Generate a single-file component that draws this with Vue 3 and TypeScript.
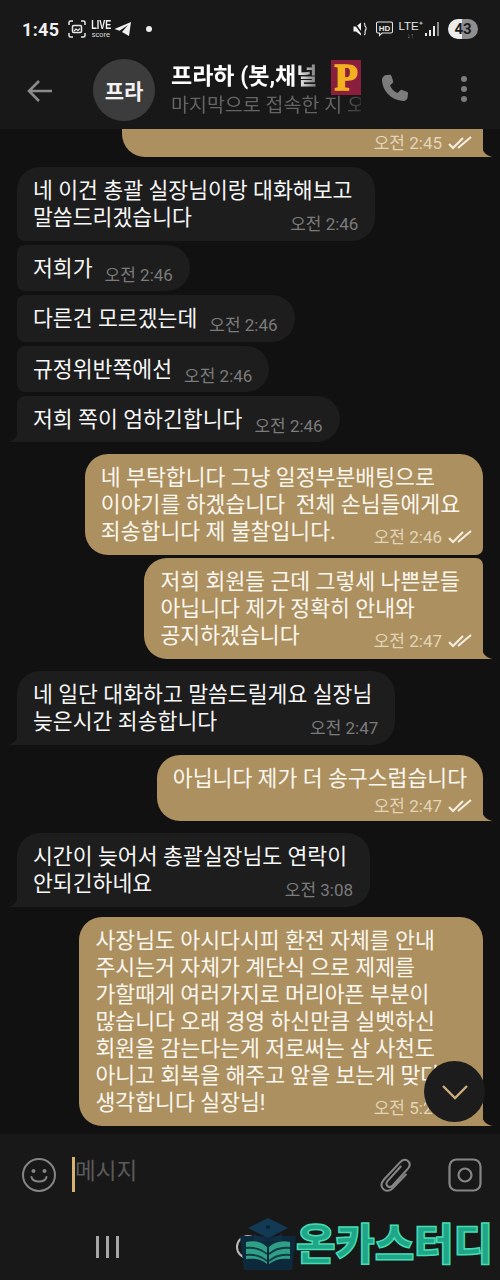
<script setup lang="ts">
interface Msg { lines: string[]; time: string; own: boolean; tail?: boolean; stack?: boolean; gap: number; small: string }
const messages: Msg[] = [
  { lines: ['네 이건 총괄 실장님이랑 대화해보고', '말씀드리겠습니다'], time: '오전 2:46', own: false, gap: 4, small: 'sbl' },
  { lines: ['저희가'], time: '오전 2:46', own: false, gap: 4, small: 'stl sbl' },
  { lines: ['다른건 모르겠는데'], time: '오전 2:46', own: false, gap: 4, small: 'stl sbl' },
  { lines: ['규정위반쪽에선'], time: '오전 2:46', own: false, gap: 4, small: 'stl sbl' },
  { lines: ['저희 쪽이 엄하긴합니다'], time: '오전 2:46', own: false, tail: true, gap: 12, small: 'stl' },
  { lines: ['네 부탁합니다 그냥 일정부분배팅으로', '이야기를 하겠습니다\u00a0\u00a0전체 손님들에게요', '죄송합니다 제 불찰입니다.'], time: '오전 2:46', own: true, gap: 3, small: 'sbr' },
  { lines: ['저희 회원들 근데 그렇세 나쁜분들', '아닙니다 제가 정확히 안내와', '공지하겠습니다'], time: '오전 2:47', own: true, tail: true, gap: 12, small: 'str' },
  { lines: ['네 일단 대화하고 말씀드릴게요 실장님', '늦은시간 죄송합니다'], time: '오전 2:47', own: false, tail: true, gap: 10, small: '' },
  { lines: ['아닙니다 제가 더 송구스럽습니다', ''], time: '오전 2:47', own: true, tail: true, stack: true, gap: 12, small: '' },
  { lines: ['시간이 늦어서 총괄실장님도 연락이', '안되긴하네요'], time: '오전 3:08', own: false, tail: true, gap: 10, small: '' },
  { lines: ['사장님도 아시다시피 환전 자체를 안내', '주시는거 자체가 계단식 으로 제제를', '가할때게 여러가지로 머리아픈 부분이', '많습니다 오래 경영 하신만큼 실벳하신', '회원을 감는다는게 저로써는 삼 사천도', '아니고 회복을 해주고 앞을 보는게 맞다고', '생각합니다 실장님!'], time: '오전 5:21', own: true, tail: true, gap: 0, small: '' },
]
const head = (m: Msg) => m.lines.slice(0, -1)
const last = (m: Msg) => m.lines[m.lines.length - 1]
</script>

<template>
  <div class="screen">
    <div class="status">
      <span class="clock">1:45</span>
      <svg class="st-ic" width="18" height="18" viewBox="0 0 18 18" fill="none" stroke="#e8e8e8" stroke-width="1.5">
        <path d="M1 5V2.5A1.5 1.5 0 0 1 2.500 1H5M13 1h2.500A1.500 1.500 0 0 1 17 2.500V5M17 13v2.500a1.500 1.500 0 0 1-1.500 1.500H13M5 17H2.500A1.500 1.500 0 0 1 1 15.500V13" />
        <rect x="4.500" y="5.500" width="9" height="7" rx="1.200" />
        <path d="M6 11l2-2 2 1.500 2-2" stroke-width="1.200" />
      </svg>
      <span class="live"><b>LIVE</b><i>score</i></span>
      <svg class="st-plane" width="18" height="16" viewBox="0 0 18 16"><path d="M17 1 0.500 8l5 1.800L14 4 8 11l7 4z" fill="#f0f0f0" /></svg>
      <span class="dot"></span>
      <span class="spacer"></span>
      <svg width="15" height="16" viewBox="0 0 15 16"><path d="M0.500 5.500h2.500L8 1.500v13L3 10.500H0.500z" fill="#f2f2f2" /><path d="M1 1.500 10 14" stroke="#1a1a1a" stroke-width="1.500" /><path d="M11 2c1.500 1 .5 2 1 3s1.500 1 1 3-1 1.500-1 3 1 2-1 3" fill="none" stroke="#ddd" stroke-width="1.200" /></svg>
      <svg class="st-hd" width="17" height="16" viewBox="0 0 17 16" fill="none" stroke="#e6e6e6" stroke-width="1.100"><path d="M2 1h13a1.500 1.500 0 0 1 1.500 1.500v8A1.500 1.500 0 0 1 15 12H6l-2.500 2.500V12H2A1.500 1.500 0 0 1 .5 10.500v-8A1.500 1.500 0 0 1 2 1z" /><text x="8.500" y="9.500" font-size="8" font-weight="700" fill="#e6e6e6" stroke="none" text-anchor="middle" font-family="Liberation Sans, sans-serif">HD</text></svg>
      <span class="lte"><span>LTE⁺</span><em>↓↑</em></span>
      <span class="signal"><i class="s1"></i><i class="s2"></i><i class="s3"></i><i class="s4"></i></span>
      <span class="batt">43</span>
    </div>

    <header class="bar">
      <svg class="back" width="26" height="24" viewBox="0 0 26 24" fill="none" stroke="#8b8b8b" stroke-width="2.600"><path d="M25 12H2M12 2 2 12l10 10" /></svg>
      <div class="avatar">프라</div>
      <div class="who">
        <div class="name-row">
          <span class="name">프라하 (봇,채널</span>
          <span class="crest">P</span>
        </div>
        <div class="seen">마지막으로 접속한 지 오</div>
      </div>
      <svg class="phone" width="34" height="34" viewBox="0 0 24 24"><path d="M6.600 2.200 9 2c.6 0 1 .3 1.200.9l1.200 3.600c.1.500 0 1-.4 1.300L9.200 9.500c.9 2.200 2.900 4.300 5.300 5.400l1.800-1.900c.4-.4.900-.5 1.400-.3l3.400 1.300c.5.200.9.700.8 1.300l-.3 2.600c-.3 1.700-1.500 2.700-3.200 2.600C10 20 3.800 13.500 3.500 5.700c0-1.800 1.300-3.200 3.100-3.500z" fill="#7c7c7c" /></svg>
      <span class="more"><i></i><i></i><i></i></span>
    </header>

    <main class="chat">
      <div class="row own">
        <div class="bubble own cut">
          <span class="time">오전 2:45</span>
          <svg class="ticks" width="25" height="14" viewBox="0 0 25 14" fill="none" stroke="#f5efe2" stroke-width="2"><path d="M1 8l4 4L15 2M10 12 23 1" /></svg>
          <svg class="tail right" width="11" height="12" viewBox="0 0 11 12"><path d="M0 0c0 6 3 10 10.500 12H0z" fill="#ad9060" /></svg>
        </div>
      </div>
      <div v-for="(m, i) in messages" :key="i" class="row" :class="{ own: m.own }" :style="{ marginBottom: m.gap + 'px' }">
        <div class="bubble" :class="[m.small, { own: m.own, tailed: m.tail, stack: m.stack, single: m.lines.length === 1 }]">
          <div v-for="(l, j) in head(m)" :key="j" class="line">{{ l }}</div>
          <div class="last">
            <span v-if="last(m)" class="lastline">{{ last(m) }}</span>
            <span v-else class="spacer"></span>
            <span class="meta">
              <span class="time">{{ m.time }}</span>
              <svg v-if="m.own" class="ticks" width="25" height="14" viewBox="0 0 25 14" fill="none" stroke="#f5efe2" stroke-width="2"><path d="M1 8l4 4L15 2M10 12 23 1" /></svg>
            </span>
          </div>
          <svg v-if="m.tail && m.own" class="tail right" width="11" height="12" viewBox="0 0 11 12"><path d="M0 0c0 6 3 10 10.500 12H0z" fill="#ad9060" /></svg>
          <svg v-if="m.tail && !m.own" class="tail left" width="11" height="12" viewBox="0 0 11 12"><path d="M11 0c0 6-3 10-10.500 12H11z" fill="#1d1d1d" /></svg>
        </div>
      </div>
      <button class="fab" aria-label="아래로">
        <svg width="28" height="16" viewBox="0 0 28 16" fill="none" stroke="#c9ad7c" stroke-width="2.400"><path d="M2 2l12 12L26 2" /></svg>
      </button>
    </main>

    <footer class="composer">
      <div class="input">
        <svg width="36" height="36" viewBox="0 0 36 36" fill="none" stroke="#858585" stroke-width="2"><circle cx="18" cy="18" r="16" /><path d="M10.500 20c1.500 6 13.500 6 15 0" stroke-linecap="round" /><circle cx="12.500" cy="14" r="2" fill="#858585" stroke="none" /><circle cx="23.500" cy="14" r="2" fill="#858585" stroke="none" /></svg>
        <span class="caret"></span>
        <span class="placeholder">메시지</span>
        <span class="spacer"></span>
        <svg class="clip" width="32" height="36" viewBox="0 0 34 36" fill="none" stroke="#858585" stroke-width="2.200" stroke-linecap="round"><path d="M22 9 8 24.500c-1.700 2-1.600 4 0 5.300s3.700 1.300 5.500-.6L29 12c3-3.300 3.300-6.500 1-8.700s-5.700-1.900-8.500 1L4.500 22.500C1 26.500 1 30.500 3.500 33s6.500 2.500 10-1l14-14.500" /></svg>
        <svg class="cam" width="34" height="34" viewBox="0 0 34 34" fill="none" stroke="#858585" stroke-width="2.200"><rect x="1.500" y="1.500" width="31" height="31" rx="7" /><circle cx="17" cy="17" r="6.500" /></svg>
      </div>
      <nav class="nav">
        <span class="recent"><i></i><i></i><i></i></span>
        <span class="home"></span>
      </nav>
      <div class="mark">
        <svg width="56" height="54" viewBox="0 0 56 54">
          <path d="M0 18 4 52h48L56 18z" fill="#0d2a3c" />
          <path d="M28 0 48 10 28 20 8 10z" fill="#123a55" />
          <path d="M14 16v7h28v-7L28 23z" fill="#0f3047" />
          <circle cx="28" cy="9" r="2" fill="#0a2233" />
          <path d="M6 24c8-2 16 0 21 5v17c-6-5-13-6-21-5z" fill="#2f9f86" />
          <path d="M50 24c-8-2-16 0-21 5v17c6-5 13-6 21-5z" fill="#2f9f86" />
          <path d="M6 30c8-1 15 1 21 6M6 37c8-1 15 1 21 6M50 30c-8-1-15 1-21 6M50 37c-8-1-15 1-21 6" stroke="#123a45" stroke-width="1.800" fill="none" />
        </svg>
        <span class="mark-text">온카스터디</span>
      </div>
    </footer>
  </div>
</template>

<style>
html, body { margin: 0; background: #111; }
</style>

<style scoped>
.screen {
  width: 500px;
  height: 1280px;
  display: flex;
  flex-direction: column;
  overflow: hidden;
  background: #111111;
  font-family: Roboto, "Noto Sans CJK KR", sans-serif;
  color: #f5f5f5;
}
.spacer { flex: 1; }

/* status */
.status {
  height: 58px;
  flex: none;
  background: #181818;
  display: flex;
  align-items: center;
  padding: 0 22px 0 22px;
  box-sizing: border-box;
}
.clock { font-size: 18px; font-weight: 700; color: #f0f0f0; letter-spacing: .3px; width: 46px; }
.live { display: flex; flex-direction: column; align-items: center; width: 20px; margin-left: 5px; line-height: 1; }
.live b { font: 700 12px/11px "Liberation Sans", sans-serif; color: #f2f2f2; transform: scaleX(.75); }
.live i { font: 400 7.500px/8px "Liberation Sans", sans-serif; color: #ddd; }
.st-plane { margin-left: 3px; }
.dot { width: 6px; height: 6px; border-radius: 50%; background: #ededed; margin-left: 14px; }
.st-hd { margin-left: 8px; }
.lte { display: flex; flex-direction: column; align-items: center; margin-left: 5px; line-height: 1; width: 25px; }
.lte span { font: 400 11.500px/12px "Liberation Sans", sans-serif; color: #e4e4e4; }
.lte em { font: 400 7px/7px "Liberation Sans", sans-serif; color: #999; }
.signal { display: flex; align-items: flex-end; gap: 2px; margin-left: 2px; height: 14px; width: 14px; }
.signal i { width: 2px; background: #e8e8e8; display: block; }
.s1 { height: 3px; } .s2 { height: 6px; } .s3 { height: 10px; } .signal .s4 { height: 14px; background: #8a8a8a; }
.batt {
  margin-left: 9px;
  width: 30px;
  height: 20px;
  border-radius: 10px;
  background: linear-gradient(90deg, #ececec 0 48%, #8e8e8e 48% 100%);
  color: #1b1b1b;
  font: 700 15px/20px Roboto, sans-serif;
  text-align: center;
}

/* app bar */
.bar {
  height: 71px;
  flex: none;
  background: #181818;
  display: flex;
  align-items: center;
  padding: 0 0 0 27px;
  box-sizing: border-box;
}
.back { margin-top: -6px; }
.avatar {
  width: 62px;
  height: 62px;
  border-radius: 50%;
  background: #3c3c3c;
  margin-left: 40px;
  margin-top: -8px;
  display: flex;
  align-items: center;
  justify-content: center;
  font-weight: 700;
  font-size: 21px;
  color: #f2f2f2;
}
.who { margin-left: 16px; width: 190px; margin-top: -12px; }
.name-row { display: flex; align-items: center; height: 32px; position: relative; }
.name {
  width: 160px;
  white-space: nowrap;
  overflow: hidden;
  font-size: 23px;
  font-weight: 700;
  color: #fff;
  -webkit-mask-image: linear-gradient(90deg, #000 78%, transparent 100%);
  mask-image: linear-gradient(90deg, #000 78%, transparent 100%);
}
.crest {
  position: absolute;
  left: 160px;
  top: 2px;
  width: 30px;
  height: 35px;
  background: #8a1f3d;
  color: #f2b21f;
  font: 900 38px/35px "Liberation Serif", serif;
  text-align: center;
  -webkit-text-stroke: 1.500px #f2b21f;
}
.seen {
  margin-top: 4px;
  white-space: nowrap;
  font-size: 19.500px;
  line-height: 24px;
  color: #646464;
  -webkit-mask-image: linear-gradient(90deg, #000 88%, rgba(0,0,0,.45) 100%);
  mask-image: linear-gradient(90deg, #000 88%, rgba(0,0,0,.45) 100%);
}
.phone { margin-left: 16px; margin-top: -9px; }
.more { display: flex; flex-direction: column; gap: 4px; margin-left: 50px; margin-top: -9px; }
.more i { display: block; width: 6px; height: 6px; border-radius: 50%; background: #7c7c7c; }

/* chat */
.chat {
  flex: 1;
  position: relative;
  overflow: hidden;
  display: flex;
  flex-direction: column;
}
.row { display: flex; padding: 0 17px; }
.row.own { justify-content: flex-end; }
.bubble {
  position: relative;
  background: #1d1d1d;
  border-radius: 23px;
  padding: 10px 17px 10px 16px;
  font-size: 21.600px;
  line-height: 27px;
  color: #f7f7f7;
  white-space: nowrap;
}
.bubble.own { background: #ad9060; padding: 10px 10px 10px 16px; color: #fbf8f0; }
.bubble.single { padding-bottom: 9.250px; }
.stl { border-top-left-radius: 8px; }
.sbl { border-bottom-left-radius: 8px; }
.str { border-top-right-radius: 7px; }
.sbr { border-bottom-right-radius: 7px; }
.tailed.own { border-bottom-right-radius: 0; }
.tailed:not(.own) { border-bottom-left-radius: 0; }
.line { padding-right: 6px; }
.bubble.own .line { padding-right: 13px; }
.bubble.stack .line { padding-right: 6px; }
.bubble.stack .last { margin-top: -5px; height: 24px; }
.last { display: flex; justify-content: space-between; align-items: flex-end; }
.lastline { margin-right: 12px; }
.meta { display: flex; align-items: center; gap: 6px; transform: translateY(5px); height: 24px; }
.own .meta { transform: translateY(4px); }
.stack .meta { transform: translateY(7px); }
.time { font-size: 17px; line-height: 24px; color: #7b7b7b; }
.own .time { color: #e2d5b8; }
.ticks { flex: none; }
.cut {
  margin-bottom: 10px;
  width: 361px;
  height: 28px;
  box-sizing: border-box;
  padding: 0 10px 0 0;
  border-radius: 0 0 0 23px;
  display: flex;
  justify-content: flex-end;
  align-items: center;
  gap: 6px;
}
.tail { position: absolute; bottom: 0; }
.tail.right { right: -10px; }
.tail.left { left: -10px; }

.fab {
  position: absolute;
  right: 15px;
  top: 932px;
  width: 61px;
  height: 61px;
  border-radius: 50%;
  border: 0;
  background: #1c1c1c;
  display: flex;
  align-items: center;
  justify-content: center;
  padding: 0;
}

/* composer */
.composer { flex: none; height: 146px; background: #181818; position: relative; }
.input {
  height: 82px;
  display: flex;
  align-items: center;
  padding: 0 18px 0 21px;
  box-sizing: border-box;
}
.caret { width: 3px; height: 35px; background: #d8b273; margin-left: 15px; margin-top: -1px; }
.placeholder { font-size: 22.500px; color: #5a5a5a; margin-top: -8px; line-height: 30px; }
.clip { margin-right: 36px; }
.nav { display: flex; align-items: center; height: 62px; padding-left: 96px; }
.recent { display: flex; gap: 7.500px; }
.recent i { display: block; width: 2.500px; height: 22px; background: #a6a6a6; }
.home { width: 20px; height: 20px; border: 2.500px solid #b9b9b9; border-radius: 50%; margin-left: 117px; }
.mark {
  position: absolute;
  left: 240px;
  top: 84px;
  display: flex;
  align-items: center;
}
.mark-text {
  font-weight: 900;
  font-size: 43px;
  line-height: 50px;
  letter-spacing: -.2px;
  color: #1fa588;
  -webkit-text-stroke: 1.500px #45dcb2;
}
</style>
